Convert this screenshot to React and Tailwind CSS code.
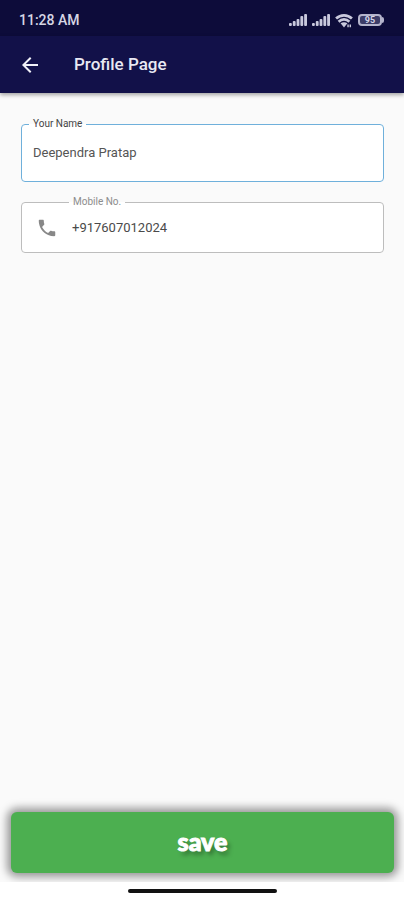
import { useState } from "react";
import { MdArrowBack, MdPhone } from "react-icons/md";

const bars = [
    { x: 0, h: 3 },
    { x: 4, h: 5 },
    { x: 8, h: 7 },
    { x: 12, h: 10 },
    { x: 16, h: 12 },
]

const Signal = () => (
    <svg className="h-3 w-[18px]" viewBox="0 0 19 12" preserveAspectRatio="none" fill="#c9c9dd" aria-hidden="true">
        {bars.map(bar => <rect key={bar.x} x={bar.x} y={12 - bar.h} width="3" height={bar.h} rx="1" />)}
    </svg>
)

const Wifi = () => (
    <svg className="h-[15px] w-[18px]" viewBox="0 0 20 16" fill="none" stroke="#c9c9dd" strokeWidth="3" aria-hidden="true">
        <path d="M1.2 5.8C6.2 1 13.8 1 18.8 5.8" />
        <path d="M4 9.4C7.5 6 12.5 6 16 9.4" />
        <path d="M6.2 11L10 15.8L13.8 11C11.5 9.6 8.5 9.6 6.2 11Z" fill="#c9c9dd" stroke="none" />
        <path d="M14.5 12.5V15.5M17 12.5V15.5" strokeWidth="1.6" />
    </svg>
)

const Battery = () => (
    <div className="flex items-center">
        <div className="flex h-3 w-6 items-center justify-center rounded border-2 border-[#b4b4cc] bg-[#3c3c68] text-[9px] leading-none font-bold text-[#d5d5e6]">95</div>
        <div className="h-1.5 w-0.5 rounded-r bg-[#b4b4cc]" />
    </div>
)

const StatusBar = () => (
    <div className="flex h-9 items-center justify-between bg-[#0d0c3a] pt-1 pr-5 pl-[19px]">
        <span className="text-sm font-medium text-[#d6d6e4]">11:28 AM</span>
        <div className="flex items-center gap-[5px]">
            <Signal />
            <Signal />
            <Wifi />
            <Battery />
        </div>
    </div>
)

export default function App() {
    const [name, setName] = useState("Deependra Pratap")
    const [mobile, setMobile] = useState("+917607012024")

    return (
        <div className="flex min-h-screen flex-col bg-[#fafafa] font-['Roboto',sans-serif]">
            <StatusBar />
            <header className="flex h-[57px] items-center gap-8 bg-[#121149] pl-[18px] shadow-[0_2px_4px_rgba(0,0,0,0.35)]">
                <button type="button" aria-label="Back" className="text-[#f0f0f8]">
                    <MdArrowBack size={24} />
                </button>
                <h1 className="text-[17px] font-medium text-[#e9e9f3]">Profile Page</h1>
            </header>

            <form id="profile" className="flex flex-1 flex-col gap-3.5 px-5 pt-[25px] pl-[21px]" onSubmit={e => e.preventDefault()}>
                <fieldset className="h-16 min-w-0 rounded border border-[#6fb0db] bg-white px-[7px]">
                    <legend className="px-1 text-[10px] leading-3 text-[#444444]">
                        <label htmlFor="name">Your Name</label>
                    </legend>
                    <input id="name" value={name} onChange={e => setName(e.target.value)} className="mt-2 block h-7 w-full bg-transparent px-1 text-[13px] text-[#555555] outline-none" />
                </fieldset>
                <fieldset className="h-[57px] min-w-0 rounded border border-[#bdbdbd] bg-white pr-[7px] pl-[47px]">
                    <legend className="px-1 text-[10px] leading-3 text-[#8d8d8d]">
                        <label htmlFor="mobile">Mobile No.</label>
                    </legend>
                    <div className="mt-1 -ml-[33px] flex h-8 items-center gap-3.5">
                        <MdPhone size={22} className="shrink-0 text-[#888888]" aria-hidden="true" />
                        <input id="mobile" type="tel" value={mobile} onChange={e => setMobile(e.target.value)} className="min-w-0 flex-1 bg-transparent text-[13px] text-[#4a4a4a] outline-none" />
                    </div>
                </fieldset>
            </form>

            <div className="flex overflow-hidden px-[11px] pt-4 pr-2.5 pb-[9px]">
                <button type="submit" form="profile" className="h-[61px] flex-1 rounded-md bg-[#4caf50] pb-0.5 font-['Lato',sans-serif] text-[25px] font-black text-white shadow-[0_0_8px_4px_rgba(0,0,0,0.4)] [-webkit-text-stroke:1px_white] text-shadow-[3px_4px_4px_rgba(0,0,0,0.35)]">
                    save
                </button>
            </div>
            <div className="flex h-[18px] items-center justify-center bg-white">
                <div className="h-1 w-[149px] rounded-sm bg-[#111111]" />
            </div>
        </div>
    )
}
